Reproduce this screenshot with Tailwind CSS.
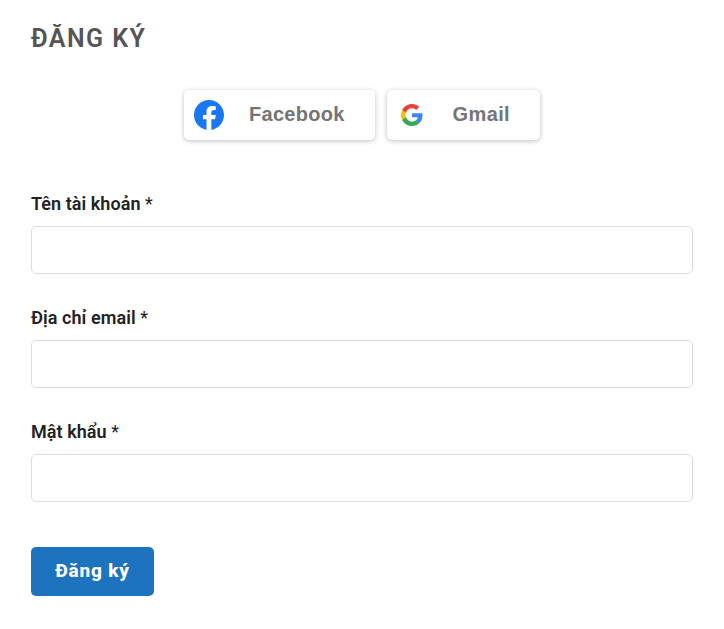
<!DOCTYPE html>
<html lang="vi"><head><meta charset="utf-8"><title>Đăng ký</title>
<script src="https://cdn.jsdelivr.net/npm/@tailwindcss/browser@4"></script></head>
<body class="bg-white font-['Roboto',sans-serif] text-[#222]">
<main class="px-[31px] pt-[22px]">
<h1 class="h-[34px] text-[25px] leading-[34px] font-semibold tracking-[1.45px] text-[#555]">ĐĂNG KÝ</h1>
<div class="mt-[34px] flex justify-center gap-3">
<button class="flex h-[50px] w-[191px] items-center rounded-[5px] bg-white pl-[10px] shadow-[0_1px_5px_rgba(0,0,0,0.25)]">
<svg class="size-[30px] shrink-0" viewBox="0 0 24 24"><path fill="#1877f2" d="M24 12.073C24 5.405 18.627 0 12 0S0 5.405 0 12.073C0 18.1 4.3 22.9 10 23.9V15.35H7.1V11.9H10V9.4C10 6.2 11.9 4.7 14.7 4.7c1.3 0 2.7.2 2.7.2v3.1h-1.5c-1.5 0-2 .8-2 1.8v2.1h3.5l-.55 3.45H13.9V23.9C19.6 23.1 24 18.1 24 12.073z"/></svg>
<span class="ml-[25px] -mt-[2px] font-['Liberation_Sans',sans-serif] text-[20px] leading-6 font-bold tracking-[0.3px] text-[#757575]">Facebook</span></button>
<button class="flex h-[50px] w-[153px] items-center rounded-[5px] bg-white pl-[14px] shadow-[0_1px_5px_rgba(0,0,0,0.25)]">
<svg class="size-[22px] shrink-0" viewBox="0 0 48 48"><path fill="#EA4335" d="M24 9.5c3.54 0 6.71 1.22 9.21 3.6l6.85-6.85C35.9 2.38 30.47 0 24 0 14.62 0 6.51 5.38 2.56 13.22l7.98 6.19C12.43 13.72 17.74 9.5 24 9.5z"/><path fill="#4285F4" d="M46.98 24.55c0-1.57-.15-3.09-.38-4.55H24v9.02h12.94c-.58 2.96-2.26 5.48-4.78 7.18l7.73 6c4.51-4.18 7.09-10.36 7.09-17.65z"/><path fill="#FBBC05" d="M10.53 28.59A14.5 14.5 0 0 1 9.77 24c0-1.6.27-3.14.76-4.59l-7.98-6.19A23.9 23.9 0 0 0 0 24c0 3.88.92 7.54 2.56 10.78l7.97-6.19z"/><path fill="#34A853" d="M24 48c6.48 0 11.93-2.13 15.89-5.81l-7.73-6c-2.15 1.45-4.92 2.3-8.16 2.3-6.26 0-11.57-4.22-13.47-9.91l-7.98 6.19C6.51 42.62 14.62 48 24 48z"/></svg>
<span class="ml-[29.5px] -mt-[2px] font-['Liberation_Sans',sans-serif] text-[20px] leading-6 font-bold tracking-[0.4px] text-[#757575]">Gmail</span></button>
</div>
<form class="mt-[50px]">
<label class="block h-[36px] text-[18px] leading-[28px] font-semibold tracking-[0.06px]" for="u">Tên tài khoản <span class="font-normal">*</span></label>
<input id="u" class="block h-[48px] w-full rounded-[5px] border border-[#ddd]">
<label class="mt-[30px] block h-[36px] text-[18px] leading-[28px] font-semibold tracking-[0.06px]" for="e">Địa chỉ email <span class="font-normal">*</span></label>
<input id="e" class="block h-[48px] w-full rounded-[5px] border border-[#ddd]">
<label class="mt-[30px] block h-[36px] text-[18px] leading-[28px] font-semibold tracking-[0.06px]" for="p">Mật khẩu <span class="font-normal">*</span></label>
<input id="p" type="password" class="block h-[48px] w-full rounded-[5px] border border-[#ddd]">
<button type="button" class="mt-[45px] block h-[49px] w-[123px] rounded-[5px] bg-[#1e73be] pb-[2px] text-[19px] leading-[47px] font-extrabold tracking-[0.8px] text-white">Đăng ký</button>
</form></main></body></html>
